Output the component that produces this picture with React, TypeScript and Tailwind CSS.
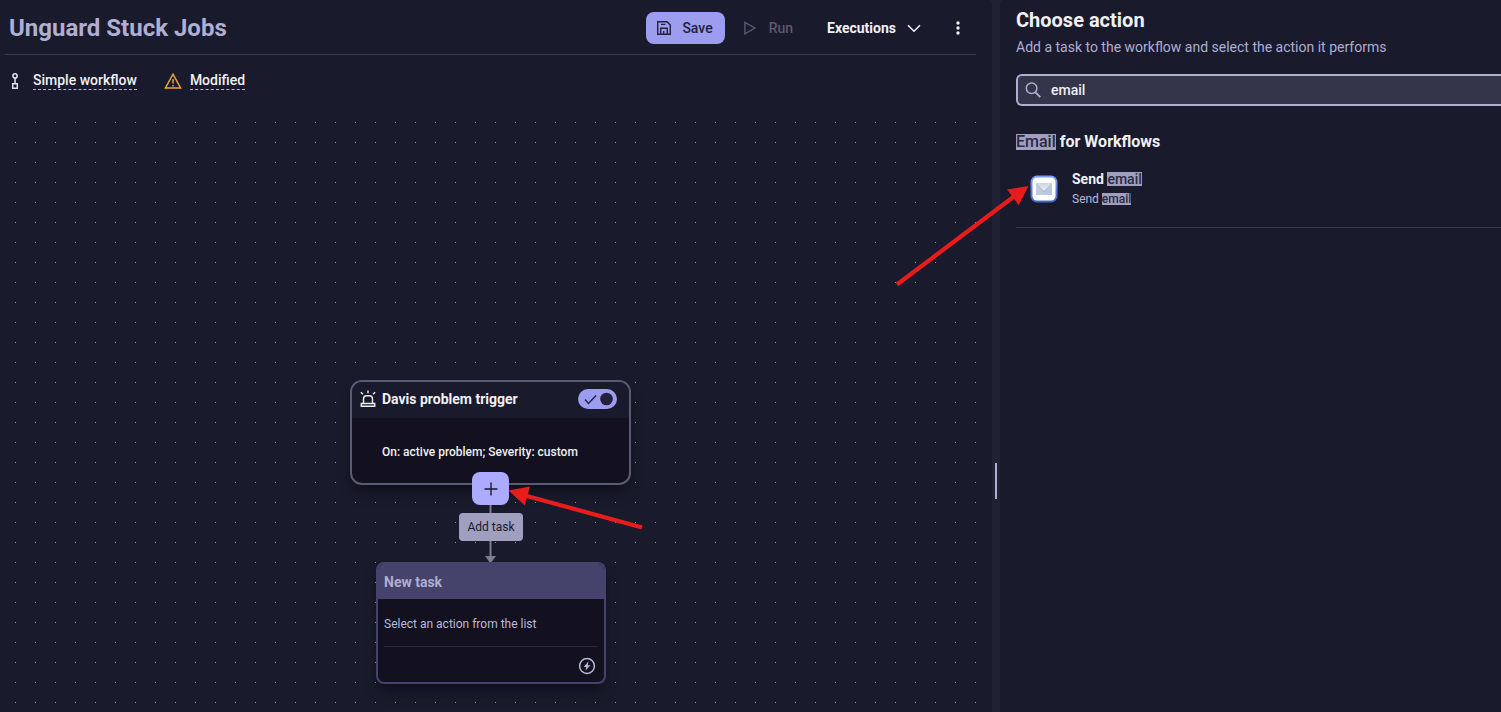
import React from "react";

function SaveIcon() {
  return (
    <svg width="16" height="16" viewBox="0 0 16 16" fill="none" stroke="currentColor" strokeWidth="1.4" aria-hidden="true">
      <path d="M1.7 1.7H11l3.3 3.3v9.3H1.7z" />
      <path d="M4.7 14.3V8.2h6.6v6.1M7.7 14v-3M5 4.400h4.500" />
    </svg>
  );
}

function PlayIcon() {
  return (
    <svg width="14" height="16" viewBox="0 0 14 16" fill="none" stroke="currentColor" strokeWidth="1.4" aria-hidden="true">
      <path d="M1.9 2.4v11.4L11.9 8z" />
    </svg>
  );
}

function ChevronIcon() {
  return (
    <svg width="16" height="16" viewBox="0 0 16 16" fill="none" stroke="currentColor" strokeWidth="1.6" aria-hidden="true">
      <path d="M2 5.2l6 6 6-6" />
    </svg>
  );
}

function DotsIcon() {
  return (
    <svg width="16" height="16" viewBox="0 0 16 16" fill="currentColor" aria-hidden="true">
      <circle cx="8" cy="3" r="1.7" />
      <circle cx="8" cy="8" r="1.7" />
      <circle cx="8" cy="13" r="1.7" />
    </svg>
  );
}

function SimpleWorkflowIcon() {
  return (
    <svg width="8" height="16" viewBox="0 0 8 16" fill="none" stroke="#e4e3f4" strokeWidth="1.5" aria-hidden="true">
      <circle cx="4" cy="2.9" r="2.1" />
      <path d="M4 5v5.5M1.7 10.7h4.6v4.5H1.7z" />
    </svg>
  );
}

function WarningIcon() {
  return (
    <svg width="18" height="18" viewBox="0 0 18 18" fill="none" stroke="#eca53d" strokeWidth="1.5" aria-hidden="true">
      <path d="M9 2.2L16.6 16H1.4z" />
      <path d="M9 7v4.6M9 12.9v1.5" />
    </svg>
  );
}

function SearchIcon() {
  return (
    <svg width="16" height="16" viewBox="0 0 16 16" fill="none" stroke="#b0aed3" strokeWidth="1.5" aria-hidden="true">
      <circle cx="6.6" cy="6.3" r="5.3" />
      <path d="M10.3 10.2l5 5" strokeWidth="1.9" />
    </svg>
  );
}

function SirenIcon() {
  return (
    <svg width="16" height="18" viewBox="0 0 16 18" fill="none" stroke="#f0f0f5" strokeWidth="1.4" aria-hidden="true">
      <path d="M3.5 13.500V9C3.500 6.800 4.800 5.700 6.500 5.700h3c1.700 0 3 1.100 3 3.300v4.500" />
      <path d="M1.300 13.500h13.400v2.800H1.300z" />
      <path d="M8 .6v2.700M.8 2.300l2.200 2M15.200 2.300l-2.200 2" />
    </svg>
  );
}

function BoltIcon() {
  return (
    <svg width="18" height="18" viewBox="0 0 18 18" fill="none" stroke="#b9b8d8" strokeWidth="1.500" aria-hidden="true">
      <circle cx="9" cy="9" r="7.4" />
      <path d="M10.600 4.300L5.600 9.900h2.700l-.9 3.900 5-5.600H9.700z" fill="#b9b8d8" stroke="none" />
    </svg>
  );
}

function MailIcon() {
  return (
    <svg width="28" height="28" viewBox="0 0 28 28" aria-hidden="true">
      <defs>
        <linearGradient id="mailRing" x1="0" y1="0" x2="0" y2="1">
          <stop offset="0" stopColor="#7d9cf5" />
          <stop offset="1" stopColor="#4467cf" />
        </linearGradient>
        <linearGradient id="mailBody" x1="0" y1="0" x2="1" y2="1">
          <stop offset="0" stopColor="#c9d2e0" />
          <stop offset="1" stopColor="#b4c5e4" />
        </linearGradient>
        <linearGradient id="mailFlap" x1="0" y1="0" x2="0" y2="1">
          <stop offset="0" stopColor="#cdd6e2" />
          <stop offset="1" stopColor="#e6ebf3" />
        </linearGradient>
      </defs>
      <rect x="0.500" y="0.500" width="27" height="27" rx="6.500" fill="url(#mailRing)" />
      <rect x="2.500" y="2.500" width="23" height="23" rx="4.500" fill="#fff" />
      <rect x="6" y="8" width="16" height="12" fill="url(#mailBody)" />
      <path d="M6.500 9l7.500 8.800L21.500 9z" fill="#98a7c0" opacity="0.650" />
      <path d="M6 8h16l-7 7.200q-1 .9-2 0z" fill="url(#mailFlap)" />
    </svg>
  );
}

function Mark({ children }: { children: React.ReactNode }) {
  return <mark className="inline-block bg-[#a09fc0] font-medium leading-none text-[#2b2941]">{children}</mark>;
}

function Header() {
  return (
    <header className="ml-[5px] mr-4 flex h-[55px] items-center border-b border-[#3a3a4d] pl-1 pt-0.5">
      <h1 className="flex-1 text-2xl font-bold text-[#b0aed3]">Unguard Stuck Jobs</h1>
      <div className="flex items-center text-sm font-medium">
        <button className="flex h-8 items-center gap-2.5 rounded-lg bg-[#9d9df0] pl-2.5 pr-3 text-[#23213b]">
          <SaveIcon />
          Save
        </button>
        <button disabled className="flex h-8 items-center gap-3 px-[18px] text-[#5b5974]">
          <PlayIcon />
          Run
        </button>
        <button className="flex h-8 items-center gap-2.5 px-4 font-bold text-[#f0f0f5]">
          Executions
          <ChevronIcon />
        </button>
        <button aria-label="More options" className="flex h-8 items-center pl-3 pr-2.5 text-[#f0f0f5]">
          <DotsIcon />
        </button>
      </div>
    </header>
  );
}

function StatusBar() {
  return (
    <div className="flex h-[57px] items-start pl-[11px] pt-4 text-sm font-medium leading-5 text-[#f0f0f5]">
      <div className="flex items-center gap-3.5">
        <SimpleWorkflowIcon />
        <button className="border-b border-dashed border-[#b9b8d8] leading-[18px]">Simple workflow</button>
      </div>
      <div className="ml-[27px] flex items-center gap-2">
        <WarningIcon />
        <button className="border-b border-dashed border-[#b9b8d8] leading-[18px]">Modified</button>
      </div>
    </div>
  );
}

function TriggerNode() {
  return (
    <section className="absolute left-[345px] top-[268px] h-[105px] w-[281px] overflow-hidden rounded-xl border-2 border-[#5c5b76] bg-[#131120] shadow-lg shadow-black/30">
      <div className="flex h-9 items-center bg-[#191a2b] pb-0.5 pl-2 pr-3">
        <SirenIcon />
        <h2 className="ml-1.5 flex-1 text-sm font-bold text-[#f0f0f5]">Davis problem trigger</h2>
        <label className="relative flex h-5 w-[39px] cursor-pointer items-center rounded-full bg-[#9d9df0]">
          <input type="checkbox" defaultChecked aria-label="Trigger enabled" className="absolute inset-0 opacity-0" />
          <svg width="39" height="20" viewBox="0 0 39 20" fill="none" aria-hidden="true">
            <path d="M7 10.500l3.500 4L18 6.500" stroke="#23213b" strokeWidth="1.400" />
            <circle cx="28.500" cy="10" r="6.300" fill="#23213b" />
          </svg>
        </label>
      </div>
      <p className="pl-[30px] pt-[26px] text-xs font-medium leading-4 text-[#f0f0f5]">On: active problem; Severity: custom</p>
    </section>
  );
}

function TaskNode() {
  return (
    <section className="absolute left-[371px] top-[450px] w-[230px] overflow-hidden rounded-lg border-2 border-[#45426b] bg-[#131120] shadow-lg shadow-black/30">
      <h2 className="flex h-[35px] items-center bg-[#45426b] pl-1.5 text-sm font-bold text-[#b0aed3]">New task</h2>
      <div className="px-1.5">
        <p className="pb-3.5 pt-[17px] text-xs leading-4 text-[#b9b8d8]">Select an action from the list</p>
        <div className="flex h-9 items-center justify-end border-t border-[#2a293a] pr-0.5 pt-0.5">
          <BoltIcon />
        </div>
      </div>
    </section>
  );
}

function Canvas() {
  return (
    <div className="relative ml-[5px] mr-4 min-h-[600px] flex-1 overflow-hidden">
      <svg className="absolute inset-0 h-full w-full" aria-hidden="true">
        <defs>
          <pattern id="dots" width="20" height="20" patternUnits="userSpaceOnUse">
            <rect x="10" y="10" width="1" height="1" fill="#918fa6" />
          </pattern>
        </defs>
        <rect width="100%" height="100%" fill="url(#dots)" />
      </svg>
      <TriggerNode />
      <svg className="absolute left-[480px] top-[390px]" width="12" height="62" viewBox="0 0 12 62" aria-hidden="true">
        <path d="M4.500 0h2v55h-2zM0 54h11L5.500 61.500z" fill="#7d7c92" />
      </svg>
      <TaskNode />
      <button aria-label="Add task" className="absolute left-[467px] top-[360px] flex h-[33px] w-[37px] items-center justify-center rounded-lg bg-[#acabff]">
        <svg width="14" height="14" viewBox="0 0 14 14" stroke="#1a1a2b" strokeWidth="1.400" aria-hidden="true">
          <path d="M7 .5v13M.5 7h13" />
        </svg>
      </button>
      <div role="tooltip" className="absolute left-[454px] top-[401px] flex h-7 w-16 items-center justify-center whitespace-nowrap rounded bg-[#a09fc0] text-xs text-[#1a1a2b]">
        Add task
      </div>
    </div>
  );
}

function ActionPanel() {
  return (
    <aside className="w-[501px] shrink-0 overflow-hidden rounded-tl bg-[#191a2b] pl-4 pt-2">
      <h2 className="text-xl font-bold leading-6 text-[#f0f0f5]">Choose action</h2>
      <p className="mt-[5px] text-sm leading-5 text-[#b0aed3]">Add a task to the workflow and select the action it performs</p>
      <label className="mt-[17px] flex h-8 items-center gap-2.5 rounded-l-md border-2 border-r-0 border-[#b0aed3] bg-[#34344a] pl-[7px]">
        <SearchIcon />
        <input type="text" aria-label="Search actions" defaultValue="email" className="min-w-0 flex-1 bg-transparent text-sm font-medium text-[#f0f0f5] outline-none" />
      </label>
      <h3 className="mt-[26px] text-base font-bold leading-5 text-[#f0f0f5]">
        <Mark>Email</Mark> for Workflows
      </h3>
      <button className="flex w-full items-center border-b border-[#3a3a4d] pb-[18px] pl-3.5 pt-[17px] text-left">
        <MailIcon />
        <span className="ml-3.5 flex flex-col">
          <span className="text-sm font-bold leading-5 text-[#f0f0f5]">
            Send <Mark>email</Mark>
          </span>
          <span className="text-xs leading-5 text-[#b9b8d8]">
            Send <Mark>email</Mark>
          </span>
        </span>
      </button>
    </aside>
  );
}

function Arrows() {
  return (
    <svg className="pointer-events-none absolute left-0 top-0" width="1060" height="560" viewBox="0 0 1060 560" fill="#e81c1c" stroke="#e81c1c" aria-hidden="true">
      <path d="M897 284.500L1014 196.500M642 527.500L526 495.700" strokeWidth="4.200" />
      <path d="M1028.500 186L1007 189.500 1018.700 205.300zM508.500 490.500L530 486.500 524.800 505.500z" stroke="none" />
    </svg>
  );
}

export default function App() {
  return (
    <div className="relative flex min-h-screen overflow-hidden bg-[#212134] font-['Roboto','Noto_Sans',sans-serif]">
      <main className="flex min-w-0 flex-1 flex-col rounded-tr bg-[#191a2b]">
        <Header />
        <StatusBar />
        <Canvas />
      </main>
      <div role="separator" aria-orientation="vertical" className="flex w-2 shrink-0 justify-center pt-[463px]">
        <div className="h-9 w-0.5 bg-[#b0aed3]" />
      </div>
      <ActionPanel />
      <Arrows />
    </div>
  );
}
